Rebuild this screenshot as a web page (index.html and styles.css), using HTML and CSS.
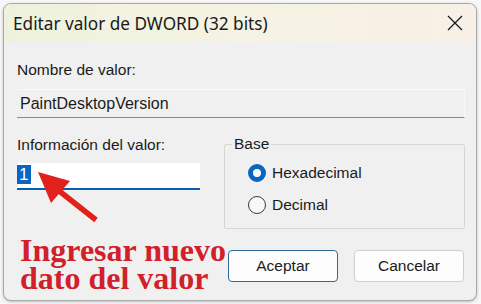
FILE: index.html
```html
<!DOCTYPE html>
<html lang="es">
<head>
<meta charset="utf-8">
<title>Editar valor de DWORD (32 bits)</title>
<link rel="stylesheet" href="styles.css">
</head>
<body>
<div class="dialog">
  <div class="titlebar">
    <span class="title">Editar valor de DWORD (32 bits)</span>
    <svg class="close" width="16" height="16" viewBox="0 0 16 16"><path d="M1 1 L15 15 M15 1 L1 15" stroke="#1a1a1a" stroke-width="1.3" fill="none"/></svg>
  </div>
  <div class="content">
    <div class="label">Nombre de valor:</div>
    <div class="field readonly">PaintDesktopVersion</div>
    <div class="row">
      <div class="left">
        <div class="label">Información del valor:</div>
        <div class="field edit"><span class="sel">1</span></div>
        <div class="note"><div class="line">Ingresar nuevo</div><div class="line">dato del valor</div></div>
      </div>
      <div class="right">
        <fieldset class="group">
          <legend>Base</legend>
          <div class="radio"><span class="dot checked"></span><span>Hexadecimal</span></div>
          <div class="radio"><span class="dot"></span><span>Decimal</span></div>
        </fieldset>
        <div class="buttons">
          <div class="btn default">Aceptar</div>
          <div class="btn">Cancelar</div>
        </div>
      </div>
    </div>
  </div>
  <svg class="arrow" width="110" height="70" viewBox="0 0 110 70">
    <path d="M54 18 L92 48" stroke="#e0211c" stroke-width="5.5" stroke-linecap="butt" fill="none"/>
    <polygon points="34,0 66,9 47,31" fill="#e0211c"/>
  </svg>
</div>
</body>
</html>
```
FILE: styles.css
```css
html, body {
  margin: 0;
  padding: 0;
}
body {
  width: 481px;
  height: 304px;
  background: #f7f7f7;
  padding: 3px 0 0 3px;
  box-sizing: border-box;
  overflow: hidden;
  font-family: "Liberation Sans", Arial, sans-serif;
  color: #1b1b1b;
}
.dialog {
  position: relative;
  width: 474px;
  height: 298px;
  box-sizing: border-box;
  background: #f0f0f0;
  border: 1px solid #a9a9a9;
  border-radius: 8px;
  overflow: hidden;
  box-shadow: 0 1px 3px rgba(0,0,0,0.25);
}
.titlebar {
  height: 38px;
  display: flex;
  align-items: center;
  justify-content: space-between;
  padding: 0 13px 0 9px;
  background: linear-gradient(90deg, #eef2dc 0%, #f5f3e3 50%, #f8f0e6 100%);
}
.title {
  font-family: "Noto Sans", "Liberation Sans", sans-serif;
  font-size: 17.2px;
  color: #1a1a1a;
  padding-top: 1px;
}
.content {
  padding: 19px 11px 0 13px;
}
.label {
  font-size: 15.5px;
  line-height: 18px;
  color: #1b1b1b;
}
.field {
  box-sizing: border-box;
  font-size: 16px;
}
.readonly {
  margin-top: 10px;
  height: 29px;
  line-height: 27px;
  width: 448px;
  border-top: 1px solid #fbfbfb;
  border-bottom: 1px solid #8a8a8a;
  border-right: 1px solid #f8f8f8;
  padding-left: 3px;
  color: #1b1b1b;
}
.row {
  display: flex;
  gap: 24px;
  margin-top: 18px;
}
.left {
  width: 183px;
}
.edit {
  margin-top: 9px;
  height: 27px;
  background: #ffffff;
  border-bottom: 2px solid #0a5fae;
  padding: 2px 0 0 0;
}
.sel {
  display: inline-block;
  background: #0a64c2;
  color: #ffffff;
  height: 19px;
  line-height: 19px;
  padding: 0 3px 0 2px;
  font-size: 17px;
}
.note {
  margin-top: 46px;
  margin-left: 3px;
  font-family: "Liberation Serif", "Times New Roman", serif;
  font-weight: bold;
  font-size: 32px;
  color: #d2202b;
  white-space: nowrap;
}
.line {
  height: 28px;
  line-height: 28px;
}
.right {
  width: 242px;
  margin-top: -1px;
}
.group {
  margin: 0;
  padding: 0;
  height: 94px;
  box-sizing: border-box;
  border: 1px solid #d6d6d6;
  border-radius: 2px;
}
.group legend {
  font-size: 15.5px;
  line-height: 18px;
  padding: 0 2px;
  margin-left: 7px;
  color: #1b1b1b;
}
.radio {
  display: flex;
  align-items: center;
  gap: 6px;
  height: 32px;
  padding-left: 23px;
  font-size: 15.5px;
}
.radio:first-of-type {
  margin-top: 4px;
}
.dot {
  width: 18px;
  height: 18px;
  box-sizing: border-box;
  border-radius: 50%;
  border: 1px solid #3a3a3a;
  background: #f8f8f8;
}
.dot.checked {
  border: 5px solid #0a64c2;
  background: #ffffff;
}
.buttons {
  display: flex;
  gap: 16px;
  margin-top: 21px;
  margin-left: 4px;
}
.btn {
  width: 110px;
  height: 32px;
  box-sizing: border-box;
  border: 1px solid #cfcfcf;
  border-radius: 4px;
  background: #fdfdfd;
  display: flex;
  align-items: center;
  justify-content: center;
  font-size: 15.5px;
  color: #1b1b1b;
}
.btn.default {
  border-color: #2f6a92;
}
.arrow {
  position: absolute;
  left: 0px;
  top: 168px;
}
```
